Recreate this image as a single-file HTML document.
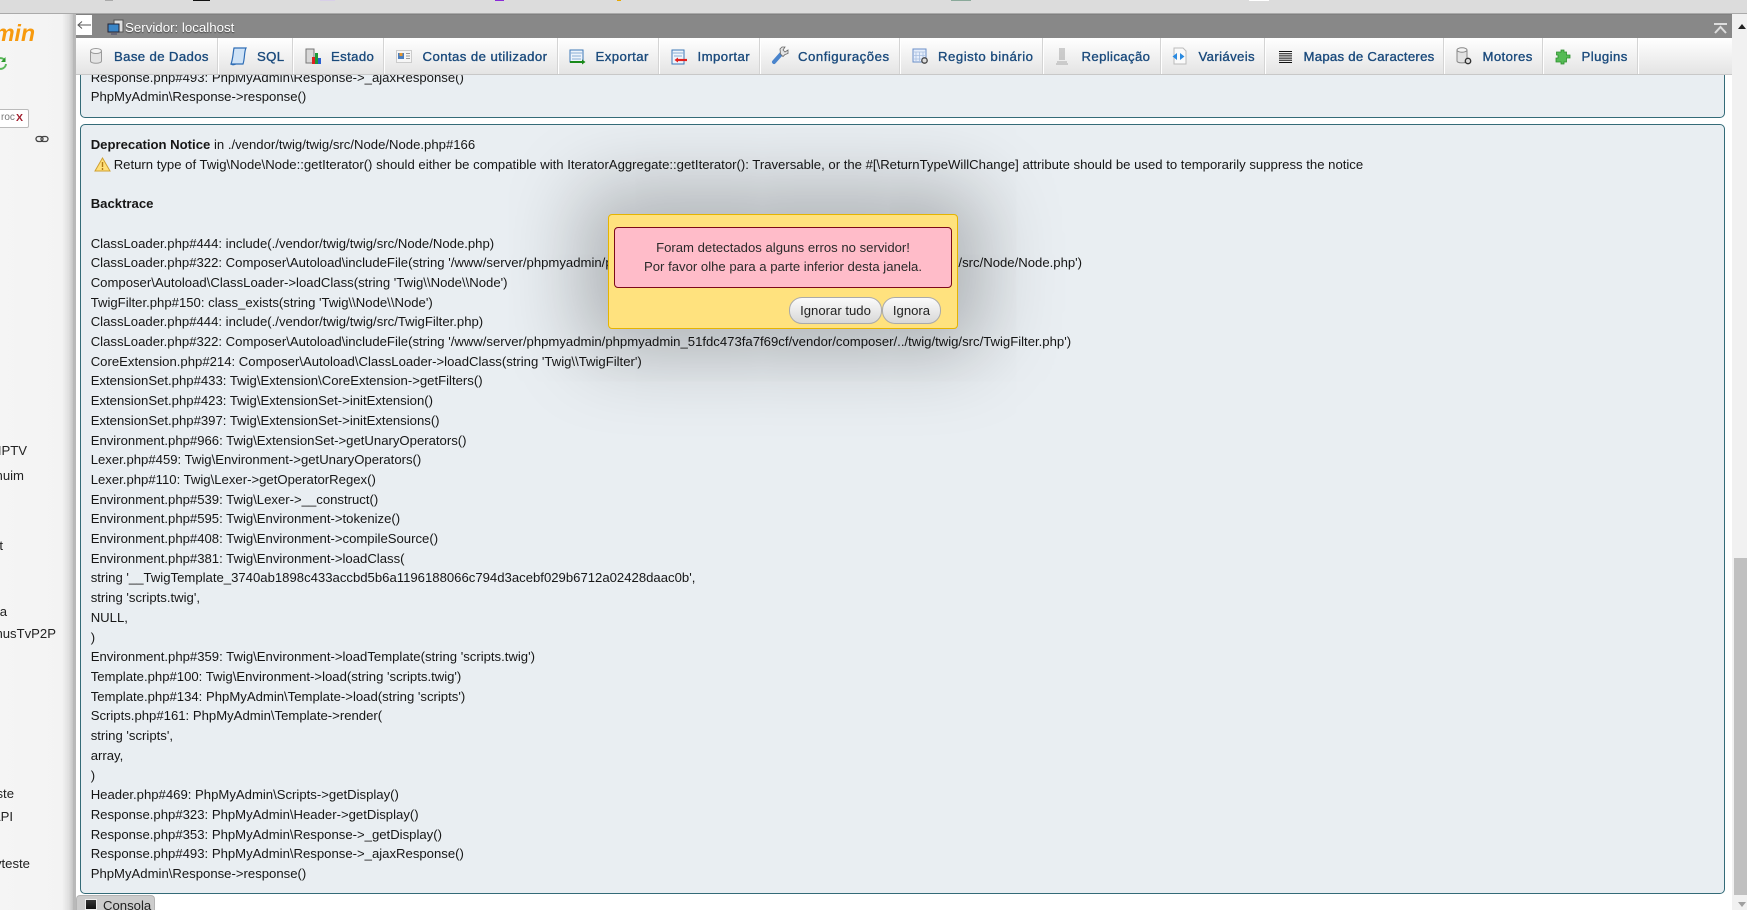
<!DOCTYPE html>
<html lang="pt"><head><meta charset="utf-8"><title>phpMyAdmin</title>
<style>
html,body{margin:0;padding:0;width:1747px;height:910px;overflow:hidden;background:#fff;font-family:"Liberation Sans",Arial,sans-serif}
.a{position:absolute}
#top{left:0;top:0;width:1747px;height:14px;background:#dcdcdc;border-bottom:1px solid #aaa;box-sizing:border-box}
#side{left:0;top:14px;width:73px;height:896px;overflow:hidden;background:linear-gradient(90deg,#f5f5f5 0,#f3f3f3 62px,#dedede 69px,#c4c4c4 73px)}
#sb{left:73px;top:14px;width:3px;height:896px;background:#b9b9b9}
.s{position:absolute;font-size:13.13px;color:#222;white-space:nowrap;line-height:16px}
#srv{left:76px;top:14px;width:1656px;height:24px;background:#888;border-top:1px solid #808080;box-sizing:border-box}
#menu{left:76px;top:38px;width:1656px;height:36.5px;background:linear-gradient(#fff,#e4e4e4);border-bottom:1px solid #c8c8c8;box-sizing:border-box}
.sep{position:absolute;top:38px;width:1px;height:36px;background:#fff;border-left:1px solid #d4d4d4}
.m{position:absolute;top:48.5px;font-size:13.2px;line-height:16px;color:#1a4a7c;white-space:nowrap;letter-spacing:.36px;-webkit-text-stroke:.35px #1a4a7c}
.i{position:absolute;top:47px}
.p{position:absolute;left:80px;width:1645px;box-sizing:border-box;background:#e9eef2;border:1px solid #346b78;border-radius:5px}
.t{position:absolute;left:90.7px;font-size:13.13px;color:#161616;white-space:pre;line-height:19.71px}
#dlg{left:608px;top:214px;width:350px;height:115px;box-sizing:border-box;background:#ffe27e;border:1px solid #e6b400;border-radius:4px;box-shadow:0 0 80px 24px rgba(0,0,0,.27)}
#pink{left:614px;top:227px;width:338px;height:61px;box-sizing:border-box;background:#ffbcc9;border:1px solid #7c0a1a;border-radius:4px;text-align:center;font-size:13.13px;line-height:19.4px;color:#2a2a2a;padding-top:10px}
.b{position:absolute;top:297px;height:27px;box-sizing:border-box;border:1px solid #aaa;border-radius:13px;background:linear-gradient(#fbfbfb,#d8d8d8);font-size:13.13px;line-height:25px;text-align:center;color:#222}
</style></head><body>
<div class="a" id="top"></div>
<div class="a" style="left:105px;top:0;width:8px;height:1px;background:#aaa"></div>
<div class="a" style="left:193px;top:0;width:17px;height:1px;background:#111"></div>
<div class="a" style="left:320px;top:0;width:15px;height:1px;background:#d8cfe8"></div>
<div class="a" style="left:495px;top:0;width:9px;height:1px;background:#8a2bd8"></div>
<div class="a" style="left:617px;top:0;width:4px;height:1px;background:#e8a800"></div>
<div class="a" style="left:951px;top:0;width:20px;height:1px;background:#8aa99a"></div>
<div class="a" style="left:1249px;top:0;width:20px;height:1px;background:#fff"></div>

<div class="a" id="side">
<div class="s" style="top:5px;font:italic bold 23px/28px 'Liberation Sans',sans-serif;color:#f79a0e;right:38px">min</div>
<svg class="a" style="left:-7px;top:42px" width="15" height="15" viewBox="0 0 15 15"><path d="M2 7a5.500 5.500 0 0 1 10-2.500M13 8a5.500 5.500 0 0 1-10 2.500" fill="none" stroke="#5ab85a" stroke-width="2"/><path d="M12.500 1v5h-4.500zM2.500 14V9h4.500z" fill="#2c9a2c"/></svg>
<div class="a" style="left:-3px;top:95px;width:30px;height:17px;background:#fff;border:1px solid #bbb;border-radius:2px"></div>
<div class="s" style="left:1px;top:96px;font-size:10px;color:#777">roc</div>
<div class="s" style="left:16px;top:96px;font-size:10.5px;font-weight:bold;color:#a01c2c">X</div>
<svg class="a" style="left:35px;top:121px" width="14" height="8" viewBox="0 0 14 8"><rect x="1" y="1.500" width="7" height="5" rx="2.500" fill="none" stroke="#444" stroke-width="1.300"/><rect x="6" y="1.500" width="7" height="5" rx="2.500" fill="none" stroke="#444" stroke-width="1.300"/></svg>
<div class="s" style="right:46px;top:429px">IPTV</div>
<div class="s" style="right:49px;top:454px">nuim</div>
<div class="s" style="right:70px;top:524px">t</div>
<div class="s" style="right:66px;top:590px">a</div>
<div class="s" style="right:17px;top:612px">nusTvP2P</div>
<div class="s" style="right:59px;top:772px">ste</div>
<div class="s" style="right:60px;top:795px">API</div>
<div class="s" style="right:43px;top:842px">yteste</div>
</div>
<div class="a" id="sb"></div>

<div class="p" style="top:20px;height:97.5px"></div>
<div class="p" style="top:124px;height:769.5px"></div>

<div class="t" style="top:67.5px;">Response.php#493: PhpMyAdmin\Response-&gt;_ajaxResponse()
PhpMyAdmin\Response-&gt;response()</div>

<div class="t" style="top:135px"><b>Deprecation Notice</b> in ./vendor/twig/twig/src/Node/Node.php#166
<span style="display:inline-block;width:23px"></span>Return type of Twig\Node\Node::getIterator() should either be compatible with IteratorAggregate::getIterator(): Traversable, or the #[\ReturnTypeWillChange] attribute should be used to temporarily suppress the notice

<b>Backtrace</b>

ClassLoader.php#444: include(./vendor/twig/twig/src/Node/Node.php)
ClassLoader.php#322: Composer\Autoload\includeFile(string '/www/server/phpmyadmin/phpmyadmin_51fdc473fa7f69cf/vendor/composer/../twig/twig/src/Node/Node.php')
Composer\Autoload\ClassLoader-&gt;loadClass(string 'Twig\\Node\\Node')
TwigFilter.php#150: class_exists(string 'Twig\\Node\\Node')
ClassLoader.php#444: include(./vendor/twig/twig/src/TwigFilter.php)
ClassLoader.php#322: Composer\Autoload\includeFile(string '/www/server/phpmyadmin/phpmyadmin_51fdc473fa7f69cf/vendor/composer/../twig/twig/src/TwigFilter.php')
CoreExtension.php#214: Composer\Autoload\ClassLoader-&gt;loadClass(string 'Twig\\TwigFilter')
ExtensionSet.php#433: Twig\Extension\CoreExtension-&gt;getFilters()
ExtensionSet.php#423: Twig\ExtensionSet-&gt;initExtension()
ExtensionSet.php#397: Twig\ExtensionSet-&gt;initExtensions()
Environment.php#966: Twig\ExtensionSet-&gt;getUnaryOperators()
Lexer.php#459: Twig\Environment-&gt;getUnaryOperators()
Lexer.php#110: Twig\Lexer-&gt;getOperatorRegex()
Environment.php#539: Twig\Lexer-&gt;__construct()
Environment.php#595: Twig\Environment-&gt;tokenize()
Environment.php#408: Twig\Environment-&gt;compileSource()
Environment.php#381: Twig\Environment-&gt;loadClass(
string '__TwigTemplate_3740ab1898c433accbd5b6a1196188066c794d3acebf029b6712a02428daac0b',
string 'scripts.twig',
NULL,
)
Environment.php#359: Twig\Environment-&gt;loadTemplate(string 'scripts.twig')
Template.php#100: Twig\Environment-&gt;load(string 'scripts.twig')
Template.php#134: PhpMyAdmin\Template-&gt;load(string 'scripts')
Scripts.php#161: PhpMyAdmin\Template-&gt;render(
string 'scripts',
array,
)
Header.php#469: PhpMyAdmin\Scripts-&gt;getDisplay()
Response.php#323: PhpMyAdmin\Header-&gt;getDisplay()
Response.php#353: PhpMyAdmin\Response-&gt;_getDisplay()
Response.php#493: PhpMyAdmin\Response-&gt;_ajaxResponse()
PhpMyAdmin\Response-&gt;response()</div>

<svg class="a" style="left:94px;top:157px" width="17" height="15" viewBox="0 0 17 15"><path d="M8.500 1 16 14H1z" fill="#ffe07a" stroke="#d0a030"/><path d="M8.500 5v5M8.500 11v2" stroke="#b07a18" stroke-width="1.400"/></svg>

<div class="a" id="srv"></div>
<div class="a" style="left:76px;top:15px;width:16px;height:20px;background:#fff"></div>
<svg class="a" style="left:77px;top:20px" width="14" height="10" viewBox="0 0 14 10"><path d="M1 5h13M5 1.500 1 5l4 3.500" fill="none" stroke="#555"/></svg>
<svg class="a" style="left:107px;top:19px" width="17" height="18" viewBox="0 0 17 18"><rect x="7" y="1" width="9" height="12" fill="#ddd" stroke="#555"/><rect x="1" y="5" width="11" height="8" fill="#3a86c8" stroke="#223"/><rect x="4" y="14" width="6" height="2" fill="#667"/></svg>
<div class="a" style="left:125px;top:19.5px;font-size:13.3px;line-height:16px;color:#fff;white-space:nowrap;text-shadow:0 1px 1px #444">Servidor: localhost</div>
<svg class="a" style="left:1714px;top:23px" width="13" height="11" viewBox="0 0 13 11"><path d="M0 1h13M1 10l5.500-6 5.500 6" fill="none" stroke="#ddd" stroke-width="2"/></svg>

<div class="a" id="menu"></div>
<div class="sep" style="left:217px"></div><div class="sep" style="left:292px"></div><div class="sep" style="left:383px"></div><div class="sep" style="left:557px"></div><div class="sep" style="left:658px"></div><div class="sep" style="left:759px"></div><div class="sep" style="left:899px"></div><div class="sep" style="left:1042px"></div><div class="sep" style="left:1160px"></div><div class="sep" style="left:1264px"></div><div class="sep" style="left:1443px"></div><div class="sep" style="left:1542px"></div><div class="sep" style="left:1637px"></div>

<div class="m" style="left:114px">Base de Dados</div>
<div class="m" style="left:257px">SQL</div>
<div class="m" style="left:331px">Estado</div>
<div class="m" style="left:422.500px;letter-spacing:.42px">Contas de utilizador</div>
<div class="m" style="left:595.500px;letter-spacing:.44px">Exportar</div>
<div class="m" style="left:697.500px;letter-spacing:.44px">Importar</div>
<div class="m" style="left:798px;letter-spacing:.5px">Configurações</div>
<div class="m" style="left:938px;letter-spacing:.5px">Registo binário</div>
<div class="m" style="left:1081.500px">Replicação</div>
<div class="m" style="left:1198.500px">Variáveis</div>
<div class="m" style="left:1303.500px;letter-spacing:.26px">Mapas de Caracteres</div>
<div class="m" style="left:1482.500px">Motores</div>
<div class="m" style="left:1581.500px;letter-spacing:.44px">Plugins</div>

<svg class="i" style="left:89px" width="14" height="18" viewBox="0 0 14 18"><path d="M1.500 4v10c0 3 11 3 11 0V4" fill="#e4e4e4" stroke="#9a9a9a"/><ellipse cx="7" cy="4" rx="5.500" ry="2.500" fill="#f5f5f5" stroke="#9a9a9a"/></svg>
<svg class="i" style="left:229px" width="18" height="19" viewBox="0 0 18 19"><path d="M5 1h12c-2 4-1 10-3 16H2c2-5 2-11 3-16z" fill="#cfe3f7" stroke="#2f6db5" stroke-width="1.200"/><path d="M2 17c1 1 3 1 5 0" stroke="#2f6db5" fill="none"/></svg>
<svg class="i" style="left:305px;top:48px" width="17" height="17" viewBox="0 0 17 17"><rect x="1" y="1" width="8" height="14" fill="#d8d8d8" stroke="#777"/><rect x="7" y="9" width="3" height="7" fill="#d22"/><rect x="10" y="5" width="3" height="11" fill="#1b9a3a"/><rect x="13" y="10" width="3" height="6" fill="#2a5fd0"/></svg>
<svg class="i" style="left:396px;top:50px" width="16" height="13" viewBox="0 0 16 13"><rect x=".5" y=".5" width="15" height="12" fill="#f6f6f6" stroke="#ccc"/><rect x="2" y="3" width="6" height="6" fill="#4a7ec0"/><rect x="3.500" y="3" width="3" height="3" fill="#e8982e"/><path d="M10 3.500h4M10 6h4M10 8.500h4" stroke="#999"/></svg>
<svg class="i" style="left:569px;top:49px" width="17" height="16" viewBox="0 0 17 16"><rect x="1" y="1" width="13" height="12" fill="#eef4fb" stroke="#3d79b8"/><path d="M1 4h13M3 7h9M3 10h9" stroke="#8aaed6"/><path d="M1 13h13" stroke="#1a8a1a" stroke-width="2"/><path d="M13 10.500l3.500 2.500-3.500 2.500z" fill="#1a8a1a"/></svg>
<svg class="i" style="left:671px;top:49px" width="17" height="16" viewBox="0 0 17 16"><rect x="1" y="1" width="12" height="14" fill="#eef4fb" stroke="#3d79b8"/><path d="M1 4h12M3 7h8" stroke="#8aaed6"/><path d="M5 11h11" stroke="#e02020" stroke-width="2.200"/><path d="M7 8.500 3.500 11 7 13.500z" fill="#e02020"/></svg>
<svg class="i" style="left:771px;top:46px" width="18" height="19" viewBox="0 0 18 19"><path d="M3 16 11 7" stroke="#4a84cc" stroke-width="4" stroke-linecap="round"/><path d="M9.500 8 12 10.500l2-2 3-1V4l-3 2-2-2 2-3h-3L9 3z" fill="#e4e4e4" stroke="#666" stroke-width=".8"/></svg>
<svg class="i" style="left:912px;top:48px" width="17" height="17" viewBox="0 0 17 17"><rect x="1" y="1" width="13" height="13" fill="#e6eefb" stroke="#6a8fc8"/><path d="M1 4h13M4 4v10M7.500 4v10M11 4v10M1 7.500h13M1 11h13" stroke="#a8bfe0" stroke-width=".8"/><circle cx="12.500" cy="12.500" r="2.700" fill="#ddd" stroke="#444" stroke-width="1.300"/></svg>
<svg class="i" style="left:1055px;top:47px" width="14" height="18" viewBox="0 0 14 18"><path d="M5 1v12M7 1v12M9 1v12" stroke="#999" stroke-width=".9"/><path d="M2 15h10M1 17h12" stroke="#aaa" stroke-width="1.100"/></svg>
<svg class="i" style="left:1171px;top:47px" width="17" height="18" viewBox="0 0 17 18"><path d="M3 1h9l3 3v13H3z" fill="#fafafa" stroke="#bbb"/><path d="M6 6 1.500 9.500 6 13zM9 6l4.500 3.500L9 13z" fill="#2a8ae0"/></svg>
<svg class="i" style="left:1279px;top:51px" width="13" height="12" viewBox="0 0 13 12"><path d="M0 .5h13M0 2.700h13M0 4.900h13M0 7.100h13M0 9.300h13M0 11.500h13" stroke="#111"/></svg>
<svg class="i" style="left:1456px;top:47px" width="17" height="19" viewBox="0 0 17 19"><path d="M1 3v11c0 2.500 10 2.500 10 0V3" fill="#e2e2e2" stroke="#888"/><ellipse cx="6" cy="3" rx="5" ry="2.200" fill="#f4f4f4" stroke="#888"/><circle cx="12" cy="14" r="2.700" fill="#ddd" stroke="#333" stroke-width="1.400"/></svg>
<svg class="i" style="left:1555px;top:49px" width="16" height="16" viewBox="0 0 16 16"><path d="M6 3V1h3v2h2.500v3H15v3h-3.500v4H9v2H6v-2H1V9h2V6H1.500V3z" fill="#55bb55" stroke="#2c8f2c" stroke-width=".8"/></svg>

<div class="a" style="left:1732px;top:14px;width:15px;height:896px;background:#f1f1f1"></div>
<div class="a" style="left:1734px;top:558px;width:13px;height:337px;background:#c0c0c0"></div>
<div class="a" style="left:1738px;top:24px;width:0;height:0;border:4px solid transparent;border-top:0;border-bottom:5px solid #222"></div>
<div class="a" style="left:1738px;top:902px;width:0;height:0;border:4.500px solid transparent;border-bottom:0;border-top:5px solid #a0a0a0"></div>

<div class="a" style="left:76px;top:895px;width:79px;height:15px;box-sizing:border-box;background:#ccc;border:1px solid #b4b4b4;border-bottom:0;border-radius:4px 4px 0 0"></div>
<div class="a" style="left:85px;top:899px;width:12px;height:11px;background:linear-gradient(#333,#111);border:1px solid #eee;box-sizing:border-box"></div>
<div class="a" style="left:103px;top:898px;font-size:13.13px;line-height:16px;color:#222">Consola</div>

<div class="a" id="dlg"></div>
<div class="a" id="pink">Foram detectados alguns erros no servidor!<br>Por favor olhe para a parte inferior desta janela.</div>
<div class="b" style="left:789px;width:93px">Ignorar tudo</div>
<div class="b" style="left:882px;width:59px">Ignora</div>
</body></html>
